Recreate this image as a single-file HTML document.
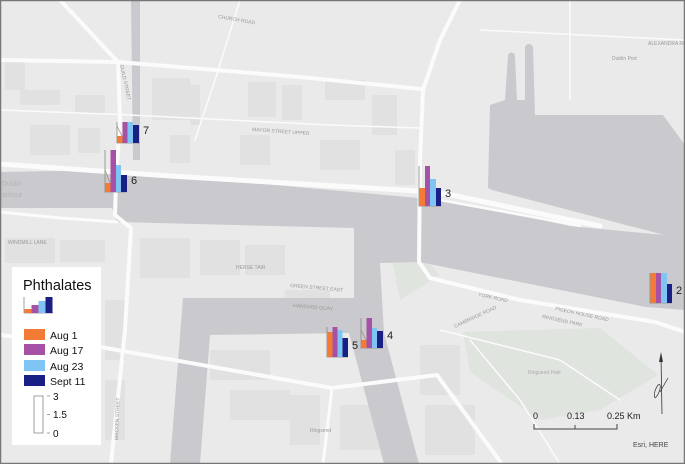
<!DOCTYPE html>
<html><head><meta charset="utf-8"><style>
html,body{margin:0;padding:0;width:685px;height:464px;overflow:hidden;background:#eaeaea;}
svg{display:block;font-family:"Liberation Sans",sans-serif;}
</style></head><body>
<svg width="685" height="464" viewBox="0 0 685 464" xmlns="http://www.w3.org/2000/svg">
<rect x="0" y="0" width="685" height="464" fill="#eaeaea"/>
<g fill="#e1e1e1">
<rect x="152" y="78" width="38" height="25"/><rect x="152" y="98" width="38" height="22"/>
<rect x="20" y="90" width="40" height="15"/><rect x="75" y="95" width="30" height="18"/>
<rect x="5" y="60" width="20" height="30"/><rect x="30" y="125" width="40" height="30"/>
<rect x="78" y="128" width="22" height="25"/><rect x="190" y="85" width="10" height="40"/>
<rect x="248" y="82" width="28" height="35"/><rect x="282" y="85" width="20" height="35"/>
<rect x="325" y="80" width="40" height="20"/><rect x="320" y="140" width="40" height="30"/>
<rect x="372" y="95" width="25" height="40"/><rect x="395" y="150" width="20" height="35"/>
<rect x="170" y="135" width="20" height="28"/><rect x="240" y="135" width="30" height="30"/>
<rect x="140" y="238" width="50" height="40"/><rect x="200" y="240" width="40" height="35"/>
<rect x="245" y="245" width="40" height="30"/><rect x="285" y="290" width="45" height="12"/>
<rect x="5" y="238" width="50" height="25"/><rect x="60" y="240" width="45" height="22"/>
<rect x="210" y="350" width="60" height="30"/><rect x="230" y="390" width="60" height="30"/>
<rect x="105" y="300" width="20" height="60"/><rect x="105" y="380" width="20" height="60"/>
<rect x="290" y="395" width="30" height="50"/><rect x="420" y="345" width="40" height="50"/>
<rect x="425" y="405" width="50" height="50"/><rect x="340" y="405" width="40" height="45"/>
</g>
<polygon points="463,332 600,328 658,375 600,410 540,420 470,372" fill="#dfe4df"/>
<polygon points="392,260 420,255 440,275 400,300" fill="#dfe4df"/>
<g fill="#cacace">
<polygon points="131,0 140,0 140,160 133,160"/>
<polygon points="0,172 109,170 419,198 447,200 570,226 653,234 685,236 685,310 646,307 419,262 380,263 384,333 419,464 384,464 349,333 210,335 200,464 170,464 183,298 354,298 354,228 117,222 112,208 0,208"/>
<polygon points="488,188 490,105 505,100 508,56 515,56 517,100 525,100 525,48 533,48 535,115 663,115 685,145 685,240 653,232 492,190"/>
</g>
<circle cx="511.5" cy="56" r="3.5" fill="#cacace"/><circle cx="529" cy="48" r="4" fill="#cacace"/>
<g stroke="#fbfbfb" fill="none" stroke-linecap="round" stroke-linejoin="round">
<polyline points="0,164 170,176 419,191 447,194 570,220 600,226" stroke-width="5"/>
<polyline points="440,200 560,222 580,226" stroke-width="2.5"/>
<polyline points="0,60 118,62 300,77 421,89" stroke-width="4"/>
<polyline points="460,0 440,40 423,90 420,160 419,262 430,278 520,300 655,322 685,332" stroke-width="4"/>
<polyline points="60,0 118,62 120,120 116,180 115,215 131,228 125,330 111,464" stroke-width="4"/>
<polyline points="0,212 60,218 117,222" stroke-width="3"/>
<polyline points="0,335 100,347 332,388 437,375 502,464" stroke-width="4"/>
<polyline points="332,388 323,464" stroke-width="3"/>
<polyline points="0,110 130,115 330,125 419,128" stroke-width="1.5"/>
<polyline points="240,0 215,80 195,140" stroke-width="1.5"/>
<polyline points="440,330 560,360 620,400" stroke-width="1.5"/>
<polyline points="480,30 685,40" stroke-width="1.5"/>
<polyline points="570,0 570,100" stroke-width="1.5"/>
<polyline points="470,340 520,400 560,464" stroke-width="1.5"/>
</g>
<g fill="#999" font-size="5">
<text x="218" y="18" transform="rotate(10 218 18)">CHURCH ROAD</text>
<text x="252" y="131" transform="rotate(4 252 131)">MAYOR STREET UPPER</text>
<text x="612" y="60">Dublin Port</text>
<text x="648" y="45">ALEXANDRA RD</text>
<text x="478" y="296" transform="rotate(12 478 296)">YORK ROAD</text>
<text x="555" y="310" transform="rotate(12 555 310)">PIGEON HOUSE ROAD</text>
<text x="542" y="318" transform="rotate(12 542 318)">RINGSEND PARK</text>
<text x="455" y="328" transform="rotate(-25 455 328)">CAMBRIDGE ROAD</text>
<text x="528" y="374" fill="#aaa">Ringsend Park</text>
<text x="310" y="432">Ringsend</text>
<text x="236" y="269">HERSE TAIR</text>
<text x="290" y="287" transform="rotate(5 290 287)">GREEN STREET EAST</text>
<text x="293" y="307" transform="rotate(5 293 307)">HANOVER QUAY</text>
<text x="120" y="65" transform="rotate(78 120 65)">GUILD STREET</text>
<text x="118" y="440" transform="rotate(-88 118 440)">MACKEN STREET</text>
<text x="8" y="244">WINDMILL LANE</text>
</g>
<text x="2" y="186" font-size="7" fill="#b5b5b8">Dublin</text>
<text x="2" y="197" font-size="7" fill="#b5b5b8">arbour</text>
<g stroke="#888" stroke-width="0.8" fill="none">
<polyline points="117,122 117,143 140,143"/>
<polyline points="105,150 105,192 127,192"/>
<polyline points="419,166 419,206 441,206"/>
<polyline points="327,327 327,357 348,357"/>
<polyline points="361,318 361,348 383,348"/>
<polyline points="650,273 650,303 672,303"/>
</g>
<g>
<rect x="117.5" y="136" width="5" height="7" fill="#f47b35"/><rect x="122.5" y="122" width="5" height="21" fill="#a552a6"/><rect x="127.5" y="122" width="5.5" height="21" fill="#7ec5f3"/><rect x="133" y="125" width="6" height="18" fill="#1a1f85"/>
<rect x="105.5" y="183" width="5" height="9" fill="#f47b35"/><rect x="110.5" y="150" width="5.5" height="42" fill="#a552a6"/><rect x="116" y="165" width="5" height="27" fill="#7ec5f3"/><rect x="121" y="175" width="6" height="17" fill="#1a1f85"/>
<rect x="419.5" y="188" width="5.5" height="18" fill="#f47b35"/><rect x="425" y="166" width="5" height="40" fill="#a552a6"/><rect x="430" y="179" width="6" height="27" fill="#7ec5f3"/><rect x="436" y="188" width="5" height="18" fill="#1a1f85"/>
<rect x="327.5" y="332" width="5" height="25" fill="#f47b35"/><rect x="332.5" y="327" width="5" height="30" fill="#a552a6"/><rect x="337.5" y="330" width="5" height="27" fill="#7ec5f3"/><rect x="342.5" y="338" width="5.5" height="19" fill="#1a1f85"/>
<rect x="361.5" y="340" width="5" height="8" fill="#f47b35"/><rect x="366.5" y="318" width="5.5" height="30" fill="#a552a6"/><rect x="372" y="328" width="5" height="20" fill="#7ec5f3"/><rect x="377" y="331" width="6" height="17" fill="#1a1f85"/>
<rect x="650.5" y="273" width="5.5" height="30" fill="#f47b35"/><rect x="656" y="273" width="5" height="30" fill="#a552a6"/><rect x="661" y="273" width="6" height="30" fill="#7ec5f3"/><rect x="667" y="284" width="5" height="19" fill="#1a1f85"/>
</g>
<g stroke="#a08a6a" stroke-width="0.7">
<line x1="117" y1="126" x2="122" y2="136"/><line x1="105" y1="170" x2="110" y2="183"/><line x1="361" y1="330" x2="366" y2="340"/>
</g>
<g font-size="11" fill="#222">
<text x="143" y="134">7</text><text x="131" y="184">6</text><text x="445" y="197">3</text>
<text x="352" y="349">5</text><text x="387" y="339">4</text><text x="676" y="294">2</text>
</g>
<rect x="12" y="267" width="89" height="178" fill="#fff"/>
<text x="23" y="290" font-size="14.5" fill="#111">Phthalates</text>
<g>
<line x1="24" y1="297" x2="24" y2="313" stroke="#888" stroke-width="0.8"/>
<line x1="24" y1="313" x2="53" y2="313" stroke="#888" stroke-width="0.8"/>
<rect x="24.5" y="309" width="7" height="4" fill="#f47b35"/><rect x="31.5" y="305" width="7" height="8" fill="#a552a6"/><rect x="38.5" y="301" width="7" height="12" fill="#7ec5f3"/><rect x="45.5" y="297" width="7" height="16" fill="#1a1f85"/>
</g>
<rect x="24" y="329" width="21" height="11" fill="#f47b35"/>
<rect x="24" y="344" width="21" height="11" fill="#a552a6"/>
<rect x="24" y="360" width="21" height="11" fill="#7ec5f3"/>
<rect x="24" y="375" width="21" height="11" fill="#1a1f85"/>
<g font-size="10.5" fill="#111">
<text x="50" y="339">Aug 1</text><text x="50" y="354">Aug 17</text><text x="50" y="370">Aug 23</text><text x="50" y="385">Sept 11</text>
</g>
<rect x="34" y="396" width="9" height="37" fill="none" stroke="#888" stroke-width="0.8"/>
<g stroke="#888" stroke-width="0.8"><line x1="47" y1="396" x2="50" y2="396"/><line x1="47" y1="414.5" x2="50" y2="414.5"/><line x1="47" y1="433" x2="50" y2="433"/></g>
<g font-size="10" fill="#111"><text x="53" y="400">3</text><text x="53" y="418">1.5</text><text x="53" y="437">0</text></g>
<g font-size="9" fill="#222"><text x="533" y="419">0</text><text x="567" y="419">0.13</text><text x="607" y="419">0.25 Km</text></g>
<g stroke="#444" stroke-width="1" fill="none"><polyline points="534,424 534,429 617,429 617,424"/><line x1="575" y1="425" x2="575" y2="429"/></g>
<text x="633" y="447" font-size="7" fill="#444">Esri, HERE</text>
<line x1="661" y1="356" x2="662" y2="414" stroke="#333" stroke-width="0.8"/>
<polygon points="661,352 659,362 663,362" fill="#333"/>
<path d="M655,398 Q653,392 658,385 Q661,383 660,389 Q658,396 655,398 M660,392 L668,378" stroke="#333" stroke-width="0.7" fill="none"/>
<rect x="0.5" y="0.5" width="684" height="463" fill="none" stroke="#777" stroke-width="1.5"/>
</svg>
</body></html>
